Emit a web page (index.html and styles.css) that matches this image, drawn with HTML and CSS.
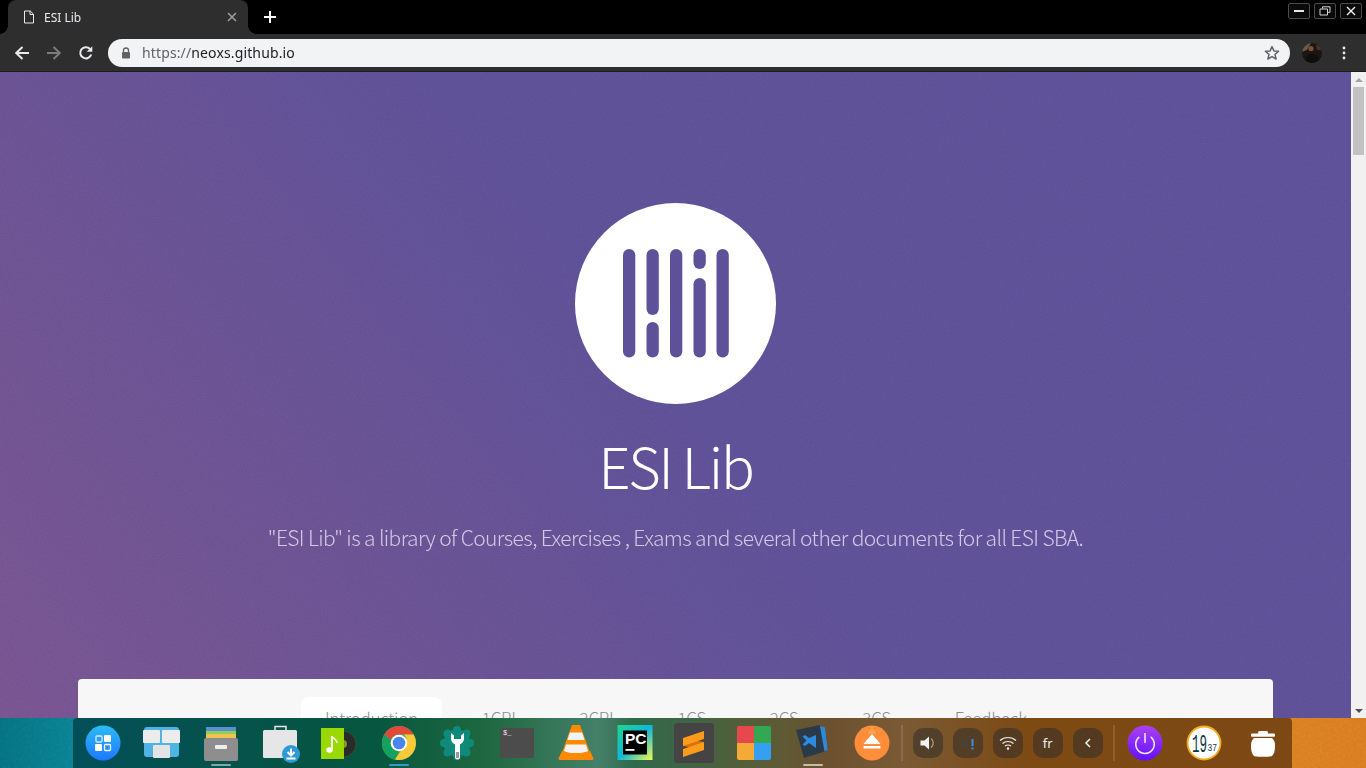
FILE: index.html
```html
<!DOCTYPE html>
<html lang="en">
<head>
<meta charset="utf-8">
<title>ESI Lib</title>
<link rel="stylesheet" href="styles.css">
</head>
<body>
<div class="desktop">
  <div class="window">
    <header class="tabstrip">
      <div class="tab">
        <svg class="tab-file" viewBox="0 0 12 14" width="12" height="14"><path d="M1.500 1h5.800L10.500 4.200V13h-9z M7 1v3.500h3.500" fill="none" stroke="#e8eaed" stroke-width="1"/></svg>
        <span class="tab-title">ESI Lib</span>
        <svg class="tab-close" viewBox="0 0 10 10" width="10" height="10"><path d="M1 1l8 8M9 1l-8 8" stroke="#9a9c9e" stroke-width="1.600"/></svg>
      </div>
      <svg class="newtab" viewBox="0 0 14 14" width="14" height="14"><path d="M7 1v12M1 7h12" stroke="#fff" stroke-width="2"/></svg>
      <div class="winctl">
        <div class="winbtn"><svg viewBox="0 0 12 8" width="12" height="8"><rect x="1" y="3" width="10" height="2" fill="#e6e6e6"/></svg></div>
        <div class="winbtn"><svg viewBox="0 0 12 10" width="12" height="10"><path d="M3.500 2.500V.8h7.500v5.500H8.500M1 3h7.500v6H1z" fill="none" stroke="#d8d8d8" stroke-width="1"/></svg></div>
        <div class="winbtn"><svg viewBox="0 0 10 10" width="10" height="10"><path d="M1 1l8 8M9 1l-8 8" stroke="#efefef" stroke-width="1.400"/></svg></div>
      </div>
    </header>
    <nav class="toolbar">
      <svg class="nav-ic" viewBox="0 0 16 16" width="16" height="16"><path d="M15 8H2.500M8.500 2L2.200 8l6.300 6" fill="none" stroke="#e8eaed" stroke-width="2"/></svg>
      <svg class="nav-ic" viewBox="0 0 16 16" width="16" height="16"><path d="M1 8h12.500M7.500 2l6.300 6-6.300 6" fill="none" stroke="#7a7c7e" stroke-width="2"/></svg>
      <svg class="nav-ic" viewBox="0 0 16 16" width="16" height="16"><path d="M13.200 9.500A5.600 5.600 0 1 1 12 4" fill="none" stroke="#e8eaed" stroke-width="2"/><path d="M14.300 1.200v5.600H8.700z" fill="#e8eaed"/></svg>
      <div class="omnibox">
        <svg class="lock" viewBox="0 0 10 12" width="10" height="12"><path d="M2.500 5V3.500a2.500 2.500 0 0 1 5 0V5" fill="none" stroke="#5f6368" stroke-width="1.300"/><rect x="1" y="5" width="8" height="6.500" rx="1" fill="#5f6368"/></svg>
        <span class="url"><span class="url-scheme">https://</span>neoxs.github.io</span>
        <svg class="star" viewBox="0 0 16 16" width="16" height="16"><path d="M8 1.600l1.900 4.300 4.700.4-3.600 3.100 1.100 4.600L8 11.600 3.900 14l1.100-4.600L1.400 6.300l4.700-.4z" fill="none" stroke="#5f6368" stroke-width="1.500" stroke-linejoin="round"/></svg>
      </div>
      <svg class="avatar" viewBox="0 0 20 20" width="20" height="20"><defs><clipPath id="av"><circle cx="10" cy="10" r="10"/></clipPath></defs><g clip-path="url(#av)"><rect width="20" height="20" fill="#1c1613"/><path d="M0 0h9L5 7 0 9z" fill="#6a5a48"/><circle cx="9" cy="5.500" r="2.600" fill="#7a5240"/><path d="M3 20c0-7 3-9 7-9s8 2 8 9z" fill="#0f0d0d"/><path d="M14 2h6v5h-5z" fill="#4a3226"/></g></svg>
      <svg class="menu" viewBox="0 0 4 14" width="4" height="14"><circle cx="2" cy="2" r="1.400" fill="#e8eaed"/><circle cx="2" cy="7" r="1.400" fill="#e8eaed"/><circle cx="2" cy="12" r="1.400" fill="#e8eaed"/></svg>
    </nav>
    <div class="viewport">
      <main class="page">
        <svg class="grain" width="100%" height="100%" aria-hidden="true"><filter id="noise"><feTurbulence type="fractalNoise" baseFrequency="0.7" numOctaves="2" seed="4"/><feColorMatrix type="saturate" values="0"/></filter><rect width="100%" height="100%" filter="url(#noise)"/></svg>
        <section class="hero">
          <svg class="logo" viewBox="0 0 201 201" width="201" height="201">
            <circle cx="100.500" cy="100.500" r="100.500" fill="#fff"/>
            <g fill="#5f5199">
              <rect x="48" y="46" width="12.300" height="108.500" rx="6.150"/>
              <rect x="71.500" y="46" width="12.300" height="66" rx="6.150"/>
              <rect x="71.500" y="119" width="12.300" height="35.500" rx="6.150"/>
              <rect x="95" y="46" width="12.300" height="108.500" rx="6.150"/>
              <rect x="118.500" y="46" width="12.300" height="20" rx="6.150"/>
              <rect x="118.500" y="75" width="12.300" height="79.500" rx="6.150"/>
              <rect x="141.500" y="46" width="12.300" height="108.500" rx="6.150"/>
            </g>
          </svg>
          <h1 class="title">ESI Lib</h1>
          <p class="lead">"ESI Lib" is a library of Courses, Exercises , Exams and several other documents for all ESI SBA.</p>
        </section>
        <section class="card">
          <ul class="tabs">
            <li class="pill active">Introduction</li>
            <li class="pill">1CPI</li>
            <li class="pill">2CPI</li>
            <li class="pill">1CS</li>
            <li class="pill">2CS</li>
            <li class="pill">3CS</li>
            <li class="pill">Feedback</li>
          </ul>
        </section>
      </main>
      <aside class="scrollbar">
        <span class="arrow-up"></span>
        <span class="thumb"></span>
        <span class="arrow-down"></span>
      </aside>
    </div>
  </div>
  <footer class="wallpaper">
    <svg class="grain-wall" width="100%" height="100%" aria-hidden="true"><filter id="noise2"><feTurbulence type="fractalNoise" baseFrequency="0.35" numOctaves="2" seed="9"/><feColorMatrix type="saturate" values="0"/></filter><rect width="100%" height="100%" filter="url(#noise2)"/></svg>
    <div class="dock">
      <div class="apps">
        <div class="app"><svg viewBox="0 0 44 44" width="44" height="44"><defs><linearGradient id="g1" x1="0" y1="0" x2="0" y2="1"><stop offset="0" stop-color="#2bbcf5"/><stop offset="1" stop-color="#1d78ff"/></linearGradient></defs><circle cx="22" cy="22" r="17.500" fill="url(#g1)"/><rect x="15" y="15" width="6" height="6" rx="1" fill="none" stroke="#fff" stroke-width="1.300" opacity=".8"/><rect x="23" y="14" width="7" height="7" rx="1" fill="#fff"/><rect x="14" y="23" width="7" height="7" rx="1" fill="#fff"/><rect x="23.500" y="23.500" width="6" height="6" rx="1" fill="none" stroke="#fff" stroke-width="1.300"/></svg></div>
        <div class="app"><svg viewBox="0 0 44 44" width="44" height="44"><rect x="4" y="6" width="35" height="30" rx="3" fill="#4fb3e3"/><rect x="3" y="9" width="17" height="13" rx="1" fill="#ececec"/><rect x="22" y="9" width="18" height="13" rx="1" fill="#ececec"/><rect x="13" y="24" width="17" height="13" rx="1" fill="#e4e4e4"/></svg></div>
        <div class="app dot-grey"><svg viewBox="0 0 44 44" width="44" height="44"><rect x="7" y="6" width="30" height="5" fill="#5b8fd0"/><rect x="7" y="10" width="30" height="4" fill="#8bd05b"/><rect x="7" y="13" width="30" height="5" fill="#f2c14e"/><rect x="5" y="17" width="34" height="23" rx="2" fill="#8e8e8e"/><rect x="16" y="24" width="12" height="4" rx="1" fill="#eee"/></svg></div>
        <div class="app"><svg viewBox="0 0 44 44" width="44" height="44"><path d="M17 10V5.500h11V10" fill="none" stroke="#e6e6e6" stroke-width="1.500"/><rect x="5" y="9" width="34" height="28" rx="1.500" fill="#e6e6e6"/><circle cx="33" cy="33" r="9" fill="#2d9ad6"/><path d="M33 27.500v6M29.500 31l3.500 3.500 3.500-3.500M28.500 37.500h9" fill="none" stroke="#fff" stroke-width="2"/></svg></div>
        <div class="app"><svg viewBox="0 0 44 44" width="44" height="44"><circle cx="26" cy="23" r="13" fill="#2b2b2b" stroke="#32541f"/><circle cx="26" cy="23" r="4" fill="#7b9a27"/><rect x="4" y="7" width="23" height="31" fill="#9bd800"/><path d="M15 15v14" stroke="#fff" stroke-width="1.800"/><ellipse cx="12.500" cy="29" rx="3.300" ry="2.700" fill="#fff"/><path d="M15 15c1 3 5 3 5 7" fill="none" stroke="#fff" stroke-width="1.500"/></svg></div>
        <div class="app dot-blue"><svg viewBox="0 0 44 44" width="44" height="44"><circle cx="22" cy="22" r="17" fill="#4caf50"/><path d="M22 5a17 17 0 0 1 14.700 8.500H22A8.500 8.500 0 0 0 14 19L7.300 13.500A17 17 0 0 1 22 5z" fill="#e0483c"/><path d="M7.300 13.500L14 19a8.500 8.500 0 0 0 8 11.500L18 39A17 17 0 0 1 7.300 13.500z" fill="#16a05d"/><path d="M36.700 13.500A17 17 0 0 1 18 38.600l8-12a8.500 8.500 0 0 0 1-13.100z" fill="#fbc938"/><circle cx="22" cy="22" r="8.300" fill="#fff"/><circle cx="22" cy="22" r="6.300" fill="#4a85ee"/></svg></div>
        <div class="app"><svg viewBox="0 0 44 44" width="44" height="44"><g fill="#0f8a7a"><circle cx="21" cy="22" r="13.500"/><circle cx="21" cy="9" r="4"/><circle cx="21" cy="35" r="4"/><circle cx="8" cy="22" r="4"/><circle cx="34" cy="22" r="4"/><circle cx="11.500" cy="12.500" r="4"/><circle cx="30.500" cy="12.500" r="4"/><circle cx="11.500" cy="31.500" r="4"/><circle cx="30.500" cy="31.500" r="4"/></g><path d="M15 12v5a7 7 0 0 0 4 6.500V36a2.500 2.500 0 0 0 5 0V23.500a7 7 0 0 0 4-6.500v-5l-3 2.500V18h-7v-3.500z" fill="#fff"/><rect x="20" y="31" width="3" height="6" fill="#999"/></svg></div>
        <div class="app"><svg viewBox="0 0 44 44" width="44" height="44"><rect x="5" y="7" width="34" height="30" rx="1.500" fill="#4c4c4c"/><text class="term-text" x="8" y="14">$_</text></svg></div>
        <div class="app"><svg viewBox="0 0 44 44" width="44" height="44"><path d="M18 4h8l11 30H7z" fill="#ff8a00"/><path d="M15.800 11.500h12.400l2.400 7.500H13.400z" fill="#f3f3f3"/><path d="M12 23.500h20l2 6.500c-5 3-19 3-24 0z" fill="#f3f3f3"/><path d="M8 30c5 3 23 3 28 0l3.500 7.500c0 1-1 1.500-2 1.500H6.500c-1 0-2-.5-2-1.500z" fill="#ff8a00"/></svg></div>
        <div class="app"><svg viewBox="0 0 44 44" width="44" height="44"><defs><linearGradient id="g2" x1="0" y1="0" x2="1" y2="1"><stop offset="0" stop-color="#21d789"/><stop offset=".5" stop-color="#0fb7dc"/><stop offset="1" stop-color="#fcf84a"/></linearGradient></defs><rect x="4.500" y="4" width="35" height="35" fill="url(#g2)"/><rect x="10" y="9.500" width="24" height="24" fill="#000"/><text class="pc-text" x="12" y="23">PC</text><rect x="12.500" y="28" width="9" height="1.800" fill="#fff"/></svg></div>
        <div class="app"><svg viewBox="0 0 44 44" width="44" height="44"><rect x="2" y="2" width="40" height="40" rx="3" fill="#444"/><path d="M11 17l21 4v8l-21-4z" fill="#d8720a"/><path d="M32 10v8l-21 7v-8z" fill="#ff9a1a"/><path d="M32 21v8l-21 7v-8z" fill="#ff9a1a"/></svg></div>
        <div class="app"><svg viewBox="0 0 44 44" width="44" height="44"><path d="M5 7a2 2 0 0 1 2-2h15v17H5z" fill="#e7484e"/><path d="M22 5h15a2 2 0 0 1 2 2v15H22z" fill="#33a853"/><path d="M5 22h17v17H7a2 2 0 0 1-2-2z" fill="#f4aa34"/><path d="M22 22h17v15a2 2 0 0 1-2 2H22z" fill="#35a0f2"/></svg></div>
        <div class="app dot-white"><svg viewBox="0 0 44 44" width="44" height="44"><path d="M5 9l24-5 6 26-22 7z" fill="#2b3a48"/><path d="M29 5l5 1.500 2.500 22-3 2z" fill="#2a8bde"/><path d="M25 14v13l-7-5-4 3-2.500-1.500 4-4-4-4 2.500-1.500 4 3z" fill="#2d8be0"/></svg></div>
        <div class="app"><svg viewBox="0 0 44 44" width="44" height="44"><circle cx="22" cy="22" r="17.500" fill="#ff8d3a"/><path d="M22 4.500L26 13h-8z" fill="#fba24f"/><path d="M22 13l8.500 10h-17z" fill="#fff"/><rect x="13.500" y="25" width="17" height="2.500" fill="#fff"/></svg></div>
      </div>
      <span class="sep"></span>
      <div class="tray">
        <div class="tray-btn"><svg viewBox="0 0 20 20" width="20" height="20"><path d="M2.500 7.500h4L11 3.500v13l-4.500-4h-4z" fill="#f2f2f2"/><path d="M13 5.500c3 2.500 3 6.500 0 9" fill="none" stroke="#a69a8c" stroke-width="1.300"/></svg></div>
        <div class="tray-btn"><svg viewBox="0 0 20 20" width="20" height="20"><path d="M8 4l5 4H3zM3 10h6v6l-6-3z" fill="#4a4238"/><rect x="13.500" y="6" width="2" height="7" fill="#3b8fe0"/><rect x="13.500" y="14.500" width="2" height="2" fill="#3b8fe0"/></svg></div>
        <div class="tray-btn"><svg viewBox="0 0 20 20" width="20" height="20"><path d="M2 7.500c4.500-4 11.500-4 16 0M4.500 10.500c3-2.700 8-2.700 11 0M7 13c1.600-1.300 4.400-1.300 6 0" fill="none" stroke="#efefef" stroke-width="1.200"/><circle cx="10" cy="15.500" r="1.200" fill="#efefef"/></svg></div>
        <div class="tray-btn tray-text">fr</div>
        <div class="tray-btn"><svg viewBox="0 0 20 20" width="20" height="20"><path d="M12 6l-4 4 4 4" fill="none" stroke="#f2f2f2" stroke-width="1.500"/></svg></div>
      </div>
      <span class="sep sep-end"></span>
      <div class="sysapps">
        <div class="app"><svg viewBox="0 0 44 44" width="44" height="44"><defs><linearGradient id="g3" x1="0" y1="0" x2="0" y2="1"><stop offset="0" stop-color="#ab42ee"/><stop offset="1" stop-color="#6410ff"/></linearGradient></defs><circle cx="22" cy="22" r="17.500" fill="url(#g3)"/><path d="M16.300 15.800a9.300 9.300 0 1 0 11.400 0M22 12v10" fill="none" stroke="#f3e8ff" stroke-width="1.500"/></svg></div>
        <div class="app"><svg viewBox="0 0 44 44" width="44" height="44"><circle cx="22" cy="22" r="16.500" fill="#fff" stroke="#f6a81e" stroke-width="1.800"/><text class="clock-h" x="10" y="31" textLength="15" lengthAdjust="spacingAndGlyphs">19</text><text class="clock-m" x="25.500" y="30" textLength="9.500" lengthAdjust="spacingAndGlyphs">37</text></svg></div>
        <div class="app"><svg viewBox="0 0 44 44" width="44" height="44"><rect x="9" y="12.500" width="24" height="3.200" rx="1" fill="#fff"/><rect x="16" y="10" width="10" height="3" rx="1.500" fill="#fff"/><path d="M12 17h18c2.500 3 3 4 3 8 0 5-1 8-3 10-1 1-17 1-18 0-2-2-3-5-3-10 0-4 .5-5 3-8z" fill="#fff"/></svg></div>
      </div>
    </div>
  </footer>
</div>
</body>
</html>
```
FILE: styles.css
```css
* { box-sizing: border-box; }
html, body { margin: 0; padding: 0; width: 1366px; height: 768px; overflow: hidden; }
body { font-family: "Noto Sans", sans-serif; background: #000; }

.desktop { display: flex; flex-direction: column; width: 1366px; height: 768px; }
.window { display: flex; flex-direction: column; height: 718px; flex: none; }

.tabstrip { display: flex; align-items: flex-start; height: 34px; background: #000; padding: 0 4px 0 8px; flex: none; }
.tab { position: relative; display: flex; align-items: center; width: 240px; height: 34px; background: #2e2e2e; border-radius: 8px 8px 0 0; padding: 0 11px 0 15px; color: #e8eaed; font-size: 12px; }
.tab::before, .tab::after { content: ""; position: absolute; bottom: 0; width: 8px; height: 8px; }
.tab::before { left: -8px; background: radial-gradient(circle at 0 0, transparent 7.500px, #2e2e2e 8px); }
.tab::after { right: -8px; background: radial-gradient(circle at 100% 0, transparent 7.500px, #2e2e2e 8px); }
.tab-file { flex: none; margin-top: -1px; }
.tab-title { margin-left: 9px; flex: 1; }
.tab-close { flex: none; }
.newtab { margin: 10px 0 0 15px; flex: none; }
.winctl { display: flex; gap: 4px; margin-left: auto; padding-top: 3px; }
.winbtn { display: flex; align-items: center; justify-content: center; width: 22px; height: 16px; border: 1px solid #4b4b4b; border-radius: 2px; background: #0a0a0a; }

.toolbar { display: flex; align-items: center; height: 38px; background: #2e2e2e; border-bottom: 1px solid #1c1c1c; padding: 0 20px 0 14px; flex: none; }
.nav-ic { flex: none; margin-right: 16px; }
.nav-ic:nth-child(3) { margin-right: 14px; }
.omnibox { display: flex; align-items: center; flex: none; width: 1182px; height: 28px; margin-top: 1px; border-radius: 14px; background: #f1f3f4; padding: 0 10px 0 13px; }
.lock { flex: none; }
.url { margin: -1px 0 1px 11px; font-size: 14px; letter-spacing: .13px; color: #202124; flex: 1; }
.url-scheme { color: #5f6368; }
.star { flex: none; }
.avatar { margin-left: 12px; flex: none; }
.menu { margin-left: 20px; flex: none; }

.viewport { display: flex; flex: 1; min-height: 0; }
.page { position: relative; flex: 1; min-width: 0; overflow: hidden; background: linear-gradient(52deg, #76538e 0%, #695190 24%, #5c4f95 50%, #5c4f96 100%); }
.grain { position: absolute; inset: 0; opacity: .14; mix-blend-mode: overlay; pointer-events: none; }

.hero { position: relative; display: flex; flex-direction: column; align-items: center; padding-top: 131px; }
.logo { display: block; flex: none; }
.title { margin: 23px 0 0; font-family: "Noto Sans CJK SC", "Noto Sans", sans-serif; font-weight: 200; font-size: 56px; line-height: 76px; color: #fff; letter-spacing: -2.2px; }
.lead { margin: 17px 0 0; font-family: "Noto Sans CJK SC", "Noto Sans", sans-serif; font-weight: 200; font-size: 21px; line-height: 34px; color: #d4c8e6; letter-spacing: -.63px; }

.card { position: relative; width: 1195px; height: 400px; margin: 125px auto 0; background: #f7f7f7; border-radius: 4px 4px 0 0; padding: 18px 0 0 223px; }
.tabs { display: flex; gap: 16px; margin: 0; padding: 0; list-style: none; }
.pill { font-family: "Noto Sans CJK SC", "Noto Sans", sans-serif; font-weight: 300; font-size: 17px; line-height: 41px; color: #8a8d94; padding: 0 24px; border-radius: 8px; white-space: nowrap; letter-spacing: -.25px; }
.active { background: #fff; }

.scrollbar { display: flex; flex-direction: column; align-items: center; width: 15px; flex: none; background: #f1f1f1; }
.thumb { width: 11px; height: 68px; background: #c1c1c1; margin-top: 5px; flex: none; }
.arrow-up { margin-top: 6px; border: 4px solid transparent; border-top: 0; border-bottom: 4px solid #a3a3a3; flex: none; }
.arrow-down { margin-top: auto; margin-bottom: 5px; border: 4px solid transparent; border-bottom: 0; border-top: 4px solid #505050; flex: none; }

.wallpaper { position: relative; display: flex; flex: none; height: 50px; padding-left: 73px; background: linear-gradient(90deg, #05707f 0%, #0b7f90 5.300%, #d97e22 94.700%, #d97b20 100%); }
.grain-wall { position: absolute; inset: 0; opacity: .18; mix-blend-mode: overlay; pointer-events: none; }
.dock { position: relative; display: flex; align-items: center; width: 1219px; height: 50px; border-radius: 4px 4px 0 0; background: linear-gradient(90deg, #034f59 0%, #07563f 25%, #1f6840 34%, #45806a 43%, #2f6a4c 46%, #5e5a34 58%, #6b5130 62%, #7a5a34 68%, #7d4a14 78%, #7d4813 100%); }
.apps { display: flex; flex: none; }
.sysapps { display: flex; flex: none; margin-left: 1px; }
.app { position: relative; display: flex; align-items: center; justify-content: center; width: 59.200px; height: 50px; }
.app svg { display: block; margin-top: -1px; }
.dot-grey::after, .dot-blue::after, .dot-white::after { content: ""; position: absolute; left: 50%; bottom: 2px; width: 20px; height: 2px; margin-left: -10px; border-radius: 1px; }
.dot-grey::after { background: #7fa8a8; }
.dot-blue::after { background: #2f9cc9; }
.dot-white::after { background: #c9bca8; }
.sep { width: 2px; height: 36px; margin-left: -1px; background: rgba(255, 255, 255, .12); flex: none; }
.sep-end { margin-left: 10px; }
.tray { display: flex; gap: 10px; margin-left: 10px; flex: none; }
.tray-btn { display: flex; align-items: center; justify-content: center; width: 30px; height: 30px; border-radius: 10px; background: rgba(50, 46, 42, .55); }
.tray-text { color: #efefef; font-size: 13px; }

.term-text { font-family: "Liberation Mono", monospace; font-size: 7px; fill: #e8e8e8; }
.pc-text { font-family: "Liberation Sans", sans-serif; font-weight: 700; font-size: 15.500px; fill: #fff; }
.clock-h { font-family: "Liberation Mono", monospace; font-size: 25px; fill: #0b3a44; }
.clock-m { font-family: "Liberation Mono", monospace; font-size: 10px; fill: #0b3a44; }
```
